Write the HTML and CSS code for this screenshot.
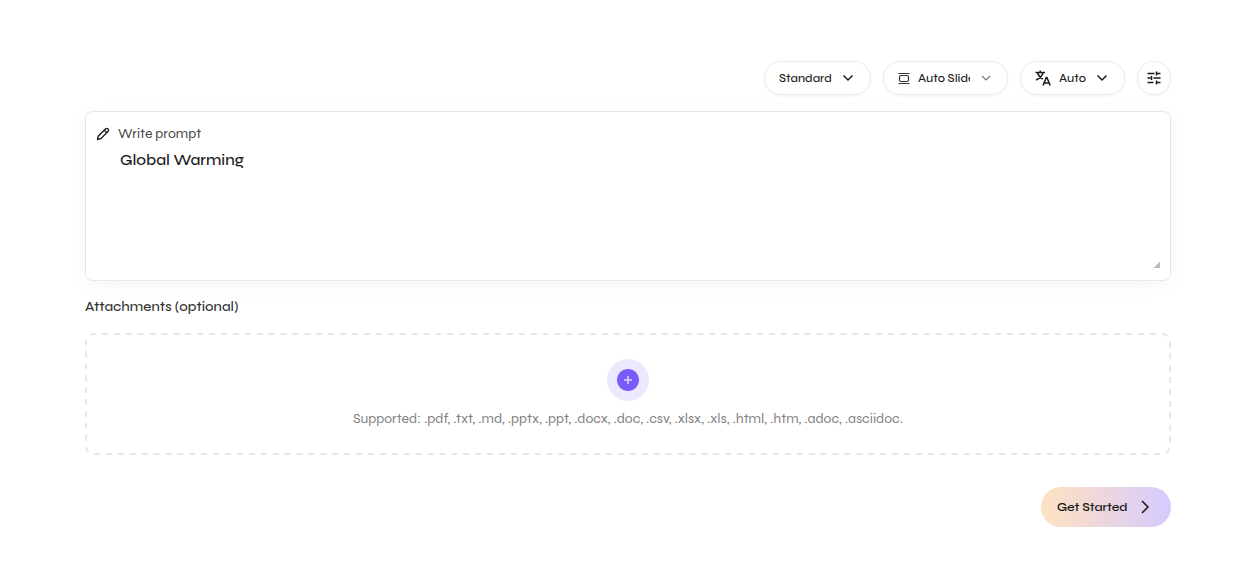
FILE: index.html
```html
<!DOCTYPE html>
<html lang="en">
<head>
    <meta charset="UTF-8">
    <meta name="viewport" content="width=device-width, initial-scale=1">
    <title>Create presentation</title>
    <link rel="stylesheet" href="styles.css">
</head>
<body>
<form class="page">
    <div class="toolbar">
        <div class="pill">
            <select class="tone" aria-label="Mode">
                <option>Standard</option>
            </select>
            <svg class="chevron" viewBox="0 0 16 16"><path d="M3.500 5.500 8 10l4.500-4.500"/></svg>
        </div>
        <div class="pill slides">
            <svg class="icon-slides" viewBox="0 0 12 14"><path d="M.5 2.500h11M.5 12.500h11"/><rect x="1.500" y="4.500" width="9" height="6" rx="1.500"/></svg>
            <select class="count" aria-label="Number of slides">
                <option>Auto Slides</option>
            </select>
            <svg class="chevron light" viewBox="0 0 16 16"><path d="m4 6 4 4 4-4"/></svg>
        </div>
        <div class="pill">
            <svg class="icon-lang" viewBox="0 0 16 16"><path d="M.5 2.500h9.500M5.200.5v2M8 2.700C7.200 5.500 4.500 8.500 1 10M2.500 2.700C3.500 5.800 5.500 8 7.800 9.200"/><path d="m8 15.500 3.300-8h.6l3.300 8M9.200 13h5"/></svg>
            <select class="lang" aria-label="Language">
                <option>Auto</option>
            </select>
            <svg class="chevron" viewBox="0 0 16 16"><path d="M3.500 5.500 8 10l4.500-4.500"/></svg>
        </div>
        <button type="button" class="round" aria-label="Advanced settings">
            <svg viewBox="0 0 16 16"><path d="M1.500 3.500h7M10.500 3.500h4M10.500 1.500v4M1.500 8h3M7.500 8h7M5.500 6v4M1.500 12.500h6M10 12.500h4.500M10.500 10.500v4"/></svg>
        </button>
    </div>

    <div class="prompt">
        <label for="prompt">
            <svg viewBox="0 0 16 16"><path d="M1.800 14.200l.7-3.700 8.300-8.200a1.900 1.900 0 0 1 2.900 2.900L5.500 13.400zM9.500 3.700l2.800 2.800"/></svg>
            Write prompt
        </label>
        <textarea id="prompt" spellcheck="false">Global Warming</textarea>
    </div>

    <h2>Attachments (optional)</h2>
    <button type="button" class="dropzone">
        <svg class="outline"><rect x="1" y="1" rx="8" pathLength="2412"/></svg>
        <span class="add">
            <svg viewBox="0 0 22 22"><path d="M11 7v8M7 11h8"/></svg>
        </span>
        <span class="types">Supported: .pdf, .txt, .md, .pptx, .ppt, .docx, .doc, .csv, .xlsx, .xls, .html, .htm, .adoc, .asciidoc.</span>
    </button>

    <button type="button" class="start">
        Get Started
        <svg viewBox="0 0 16 16"><path d="m4 2 6 6-6 6"/></svg>
    </button>
</form>
</body>
</html>
```

FILE: styles.css
```css
*{
    box-sizing:border-box;
}
body{
    margin:0;
    background:#fff;
    color:#191919;
    font-family:Syne, Inter, "Liberation Sans", sans-serif;
    font-size:14px;
}
button, select, textarea{
    margin:0;
    padding:0;
    border:none;
    background:none;
    color:inherit;
    font:inherit;
}
svg{
    flex:none;
    width:16px;
    height:16px;
    fill:none;
    stroke:#191919;
    stroke-width:1.5;
}
.page{
    display:flex;
    flex-direction:column;
    padding:61px 79px 52px 85px;
}
.toolbar{
    display:flex;
    justify-content:flex-end;
    gap:12px;
    margin-bottom:16px;
}
.pill, .round{
    display:flex;
    align-items:center;
    height:34px;
    border:1px solid #ededef;
    border-radius:17px;
    background:#fff;
    box-shadow:0 1px 3px rgba(0,0,0,.06);
}
.pill{
    gap:8px;
    padding:0 14px;
}
.pill select{
    appearance:none;
    font-size:12px;
    font-weight:500;
    line-height:16px;
}
.tone{
    width:53px;
}
.count{
    width:52px;
}
.lang{
    width:27px;
}
.slides{
    padding-right:13px;
}
.icon-slides{
    width:12px;
    height:14px;
    stroke:#333;
    stroke-width:1.2;
}
.light{
    stroke:#777;
    stroke-width:1.2;
}
.round{
    justify-content:center;
    width:34px;
}
.prompt{
    display:flex;
    flex-direction:column;
    height:170px;
    padding:11px 10px 12px 10px;
    border:1px solid #e5e7eb;
    border-radius:8px;
    background:#fff;
    box-shadow:0 4px 20px rgba(0,0,0,.04);
}
.prompt label{
    display:flex;
    align-items:center;
    gap:8px;
    color:#444;
    line-height:22px;
}
.prompt label svg{
    width:14px;
    height:14px;
}
.prompt textarea{
    flex:1;
    padding:3px 24px;
    outline:none;
    font-size:16px;
    font-weight:500;
    line-height:24px;
}
.prompt textarea::-webkit-resizer{
    background:linear-gradient(135deg, #fff 77%, #bbb 77%);
}
h2{
    margin:16px 0;
    color:#333;
    font-size:14px;
    font-weight:500;
    line-height:20px;
}
.dropzone{
    display:flex;
    flex-direction:column;
    align-items:center;
    gap:8px;
    position:relative;
    padding:26px;
}
/* dashed frame drawn over the edge, 6px on and 6px off */
.outline{
    position:absolute;
    top:0;
    left:0;
    width:100%;
    height:100%;
    stroke:#e5e7eb;
    stroke-width:2;
    stroke-dasharray:6 6;
    stroke-dashoffset:4;
}
.outline rect{
    width:calc(100% - 2px);
    height:calc(100% - 2px);
}
.add{
    display:flex;
    padding:10px;
    border-radius:50%;
    background:#ebe9fe;
}
.add svg{
    width:22px;
    height:22px;
    border-radius:50%;
    background:#7a5af8;
    stroke:#ddd6fe;
}
.types{
    color:#808080;
    font-size:14px;
    line-height:20px;
}
.start{
    display:flex;
    align-items:center;
    align-self:flex-end;
    gap:10px;
    width:130px;
    height:40px;
    margin-top:32px;
    padding-left:16px;
    border-radius:20px;
    background:linear-gradient(90deg, #fde2c3, #f3dad3 33%, #e4d3e9 66%, #d5caff);
    font-size:12px;
    font-weight:600;
}
```
